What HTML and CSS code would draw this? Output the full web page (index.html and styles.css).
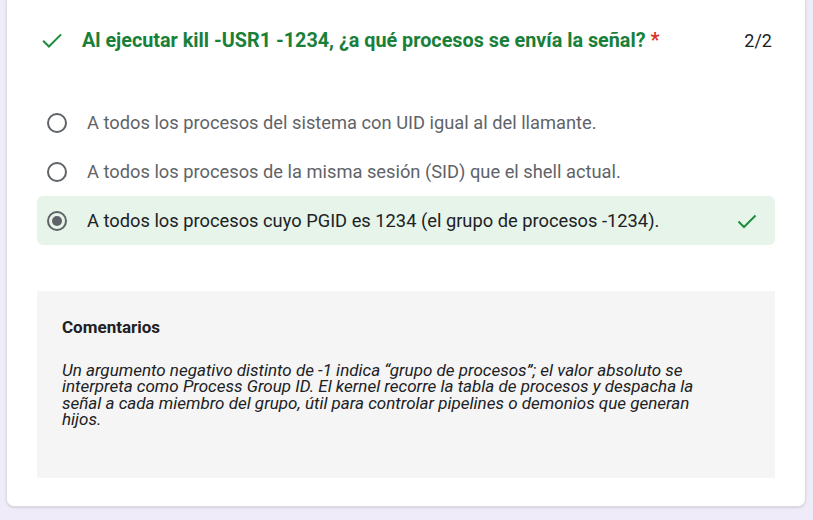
FILE: index.html
```html
<!DOCTYPE html>
<html lang="es">
<head>
<meta charset="utf-8">
<title>Pregunta</title>
<link rel="stylesheet" href="styles.css">
</head>
<body>
<div class="card">
  <div class="header">
    <svg class="check title-check" viewBox="0 0 24 24" width="26" height="26"><path d="M3.8 12.6l5.4 5.4L20.4 6.8" fill="none" stroke="#1e8e3e" stroke-width="1.9"/></svg>
    <div class="title">Al ejecutar kill -USR1 -1234, ¿a qué procesos se envía la señal? <span class="req">*</span></div>
    <div class="points">2/2</div>
  </div>
  <div class="options">
    <div class="opt">
      <span class="radio"></span>
      <span class="label">A todos los procesos del sistema con UID igual al del llamante.</span>
    </div>
    <div class="opt">
      <span class="radio"></span>
      <span class="label">A todos los procesos de la misma sesión (SID) que el shell actual.</span>
    </div>
    <div class="opt selected">
      <span class="radio on"></span>
      <span class="label">A todos los procesos cuyo PGID es 1234 (el grupo de procesos -1234).</span>
      <svg class="check opt-check" viewBox="0 0 24 24" width="24" height="24"><path d="M3.5 12.5l5.5 5.5L20.5 6.5" fill="none" stroke="#1e8e3e" stroke-width="2"/></svg>
    </div>
  </div>
  <div class="comments">
    <div class="c-title">Comentarios</div>
    <div class="c-text">Un argumento negativo distinto de -1 indica “grupo de procesos”; el valor absoluto se interpreta como Process Group ID. El kernel recorre la tabla de procesos y despacha la señal a cada miembro del grupo, útil para controlar pipelines o demonios que generan hijos.</div>
  </div>
</div>
</body>
</html>
```

FILE: styles.css
```css
html, body {
  margin: 0;
  padding: 0;
}
body {
  background: #f0ebf8;
  font-family: Roboto, "Liberation Sans", Arial, sans-serif;
  width: 813px;
  height: 520px;
  overflow: hidden;
}
.card {
  margin: 0 7px 0 6px;
  height: 507px;
  box-sizing: border-box;
  background: #fff;
  border: 1px solid #dadce0;
  border-top: none;
  border-radius: 0 0 8px 8px;
  box-shadow: 0 1px 2px rgba(60, 64, 67, 0.15);
  padding: 0 30px 0 30px;
}
.header {
  display: flex;
  align-items: center;
  height: 80px;
  padding: 0 3px 0 2px;
}
.title-check {
  flex: none;
  margin-right: 17px;
}
.title {
  flex: 1;
  font-weight: 700;
  font-size: 19.8px;
  color: #188038;
}
.req {
  color: #d93025;
}
.points {
  font-size: 18px;
  color: #202124;
}
.options {
  margin-top: 18px;
  display: flex;
  flex-direction: column;
}
.opt {
  display: flex;
  align-items: center;
  height: 49px;
  padding: 0 16px 0 10px;
  border-radius: 6px;
}
.opt.selected {
  background: #e6f4ea;
}
.radio {
  flex: none;
  width: 20px;
  height: 20px;
  box-sizing: border-box;
  border: 2px solid #5f6368;
  border-radius: 50%;
  margin-right: 20px;
  position: relative;
}
.radio.on::after {
  content: "";
  position: absolute;
  left: 3px;
  top: 3px;
  width: 10px;
  height: 10px;
  border-radius: 50%;
  background: #5f6368;
}
.label {
  flex: 1;
  font-size: 18.3px;
  color: #5f6368;
}
.selected .label {
  color: #202124;
}
.opt-check {
  flex: none;
}
.comments {
  margin-top: 46px;
  height: 187px;
  box-sizing: border-box;
  background: #f5f5f5;
  padding: 26px 52px 0 25px;
}
.c-title {
  font-size: 17px;
  line-height: 20px;
  font-weight: 700;
  color: #202124;
  margin-bottom: 25px;
}
.c-text {
  font-size: 17px;
  font-style: italic;
  line-height: 16.4px;
  color: #202124;
}
```
